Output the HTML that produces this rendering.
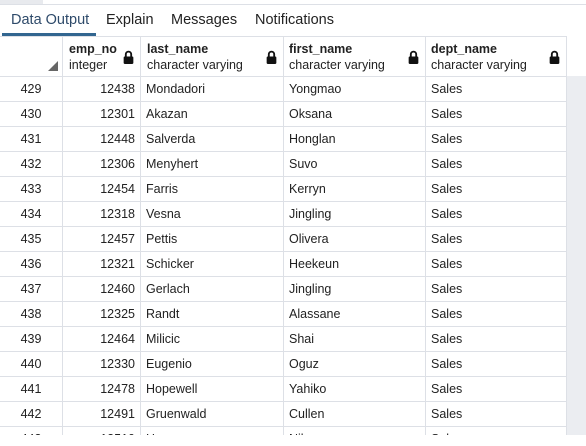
<!DOCTYPE html>
<html><head><style>
*{margin:0;padding:0;box-sizing:border-box}
body{width:586px;height:443px;background:#fff;font-family:"Liberation Sans",Arial,sans-serif;position:relative;overflow:hidden;color:#222}
.topg{position:absolute;left:0;top:0;width:43px;height:4px;background:#e8eaee}
.topl{position:absolute;left:0;top:4px;width:586px;height:1px;background:#dde0e6}
.tab{position:absolute;top:12px;font-size:14.5px;color:#222}
.ul{position:absolute;left:2px;top:33px;width:94px;height:3px;background:#326690}
.rg{position:absolute;left:567px;top:76px;width:19px;height:359px;background:#ebedf1}
.hl{position:absolute;left:0;width:567px;height:1px;background:#dde0e6}
.vl{position:absolute;top:36px;width:1px;height:399px;background:#dde0e6}
.c{position:absolute;font-size:12.5px;line-height:14px}
.hd{position:absolute;font-size:12.5px;line-height:16px}
.lock{position:absolute;width:11px;height:14px}
</style></head><body>
<div class="topg"></div><div class="topl"></div>
<div class="tab" style="left:11px;color:#2e4a6a">Data Output</div>
<div class="tab" style="left:106px">Explain</div>
<div class="tab" style="left:171px">Messages</div>
<div class="tab" style="left:255px">Notifications</div>
<div class="ul"></div>
<div class="rg"></div>
<div class="hl" style="top:36px"></div>
<div id="rows"></div>
<div class="vl" style="left:62px"></div>
<div class="vl" style="left:140px"></div>
<div class="vl" style="left:283px"></div>
<div class="vl" style="left:425px"></div>
<div class="vl" style="left:566px"></div>
<svg style="position:absolute;left:48px;top:61px" width="10" height="10"><polygon points="10,0 10,10 0,10" fill="#666"/></svg>
<div class="hd" style="left:69px;top:41px"><b>emp_no</b><br>integer</div>
<div class="hd" style="left:147px;top:41px"><b>last_name</b><br>character varying</div>
<div class="hd" style="left:289px;top:41px"><b>first_name</b><br>character varying</div>
<div class="hd" style="left:431px;top:41px"><b>dept_name</b><br>character varying</div>
<svg class="lock" style="left:123px;top:50px" viewBox="0 0 10 13"><path d="M2.5 6.5V4a2.5 2.5 0 0 1 5 0v2.5" fill="none" stroke="#111" stroke-width="1.7"/><rect x="0.5" y="6" width="9" height="7" rx="1" fill="#111"/></svg>
<svg class="lock" style="left:266px;top:50px" viewBox="0 0 10 13"><path d="M2.5 6.5V4a2.5 2.5 0 0 1 5 0v2.5" fill="none" stroke="#111" stroke-width="1.7"/><rect x="0.5" y="6" width="9" height="7" rx="1" fill="#111"/></svg>
<svg class="lock" style="left:408px;top:50px" viewBox="0 0 10 13"><path d="M2.5 6.5V4a2.5 2.5 0 0 1 5 0v2.5" fill="none" stroke="#111" stroke-width="1.7"/><rect x="0.5" y="6" width="9" height="7" rx="1" fill="#111"/></svg>
<svg class="lock" style="left:549px;top:50px" viewBox="0 0 10 13"><path d="M2.5 6.5V4a2.5 2.5 0 0 1 5 0v2.5" fill="none" stroke="#111" stroke-width="1.7"/><rect x="0.5" y="6" width="9" height="7" rx="1" fill="#111"/></svg>
<script>
var d=[[429,12438,"Mondadori","Yongmao"],[430,12301,"Akazan","Oksana"],[431,12448,"Salverda","Honglan"],[432,12306,"Menyhert","Suvo"],[433,12454,"Farris","Kerryn"],[434,12318,"Vesna","Jingling"],[435,12457,"Pettis","Olivera"],[436,12321,"Schicker","Heekeun"],[437,12460,"Gerlach","Jingling"],[438,12325,"Randt","Alassane"],[439,12464,"Milicic","Shai"],[440,12330,"Eugenio","Oguz"],[441,12478,"Hopewell","Yahiko"],[442,12491,"Gruenwald","Cullen"],[443,12510,"Ha","Nik"]];
var h="";
for(var i=0;i<d.length;i++){var t=76+i*25;var ty=t+6;
h+='<div class="hl" style="top:'+t+'px"></div>';
h+='<div class="c" style="left:0;width:62px;text-align:center;top:'+ty+'px">'+d[i][0]+'</div>';
h+='<div class="c" style="left:62px;width:73px;text-align:right;top:'+ty+'px">'+d[i][1]+'</div>';
h+='<div class="c" style="left:146px;top:'+ty+'px">'+d[i][2]+'</div>';
h+='<div class="c" style="left:289px;top:'+ty+'px">'+d[i][3]+'</div>';
h+='<div class="c" style="left:431px;top:'+ty+'px">Sales</div>';}
document.getElementById("rows").innerHTML=h;
</script>
<div style="position:absolute;left:0;top:435px;width:586px;height:8px;background:#fff"></div>
</body></html>
